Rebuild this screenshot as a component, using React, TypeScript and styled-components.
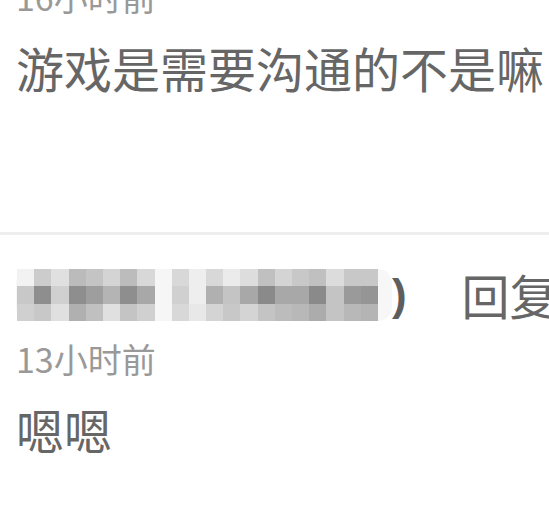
import React from "react";
import styled, { createGlobalStyle } from "styled-components";

const GlobalStyle = createGlobalStyle`
  html, body {
    margin: 0;
    padding: 0;
    background: #ffffff;
  }
  body {
    width: 549px;
    height: 515px;
    overflow: hidden;
    font-family: "Noto Sans CJK SC", "Noto Sans", sans-serif;
  }
`;

const Page = styled.div`
  width: 549px;
  height: 515px;
  overflow: hidden;
  display: flex;
  flex-direction: column;
`;

const List = styled.div`
  display: flex;
  flex-direction: column;
  margin-top: -23px;
`;

const Comment = styled.div<{ $padTop: number; $padBottom: number; $divider?: boolean }>`
  display: flex;
  flex-direction: column;
  padding: ${(p) => p.$padTop}px 0 ${(p) => p.$padBottom}px 16px;
  border-bottom: ${(p) => (p.$divider ? "3px solid #eeeeee" : "none")};
`;

const Header = styled.div`
  display: flex;
  align-items: center;
  height: 56px;
  white-space: nowrap;
  margin-bottom: 17px;
`;

const Mosaic = styled.div`
  flex-shrink: 0;
  display: grid;
  grid-template-columns: repeat(21, 17.2px);
  grid-auto-rows: 17.4px;
  background: #f7f7f7;
  border-radius: 14px;
  padding: 0 14px 0 1px;
  margin-top: 2px;
`;

const Cell = styled.div<{ $shade: string }>`
  background: ${(p) => p.$shade};
`;

const Paren = styled.span`
  flex-shrink: 0;
  font-family: "Liberation Sans", Arial, sans-serif;
  font-weight: 700;
  font-size: 44px;
  line-height: 56px;
  color: #5e5e5e;
  margin-top: 2px;
`;

const Reply = styled.span`
  flex-shrink: 0;
  font-size: 48px;
  line-height: 56px;
  color: #666666;
  margin-left: 55px;
`;

const Time = styled.div`
  font-size: 34px;
  line-height: 40px;
  color: #999999;
  margin-bottom: 22px;
`;

const Body = styled.div`
  font-size: 48px;
  line-height: 56px;
  color: #666666;
  white-space: nowrap;
`;

const rows: string[][] = [
  ["#f2f2f2", "#cccccc", "#e0e0e0", "#bbbbbb", "#c4c4c4", "#d4d4d4", "#bcbcbc", "#d8d8d8", "#f6f6f6", "#d8d8d8", "#eeeeee", "#d8d8d8", "#ebebeb", "#dddddd", "#c0c0c0", "#d4d4d4", "#c8c8c8", "#c0c0c0", "#dcdcdc", "#c8c8c8", "#c8c8c8"],
  ["#c8c8c8", "#8e8e8e", "#d0d0d0", "#8e8e8e", "#9e9e9e", "#b4b4b4", "#8e8e8e", "#a8a8a8", "#f6f6f6", "#d0d0d0", "#eeeeee", "#b0b0b0", "#c4c4c4", "#a8a8a8", "#8a8a8a", "#a8a8a8", "#a8a8a8", "#8a8a8a", "#c4c4c4", "#9a9a9a", "#959595"],
  ["#d0d0d0", "#c8c8c8", "#e0e0e0", "#b0b0b0", "#c0c0c0", "#e0e0e0", "#c4c4c4", "#d0d0d0", "#f6f6f6", "#d8d8d8", "#e8e8e8", "#d4d4d4", "#c8c8c8", "#d4d4d4", "#c4c4c4", "#bcbcbc", "#b8b8b8", "#acacac", "#c4c4c4", "#b8b8b8", "#b4b4b4"],
];

export default function App() {
  return (
    <Page>
      <GlobalStyle />
      <List>
        <Comment $padTop={0} $padBottom={137} $divider>
          <Time>16小时前</Time>
          <Body>游戏是需要沟通的不是嘛</Body>
        </Comment>
        <Comment $padTop={31} $padBottom={40}>
          <Header>
            <Mosaic>
              {rows.flatMap((row, r) =>
                row.map((c, i) => <Cell key={`${r}-${i}`} $shade={c} />)
              )}
            </Mosaic>
            <Paren>)</Paren>
            <Reply>回复</Reply>
          </Header>
          <Time>13小时前</Time>
          <Body>嗯嗯</Body>
        </Comment>
      </List>
    </Page>
  );
}
